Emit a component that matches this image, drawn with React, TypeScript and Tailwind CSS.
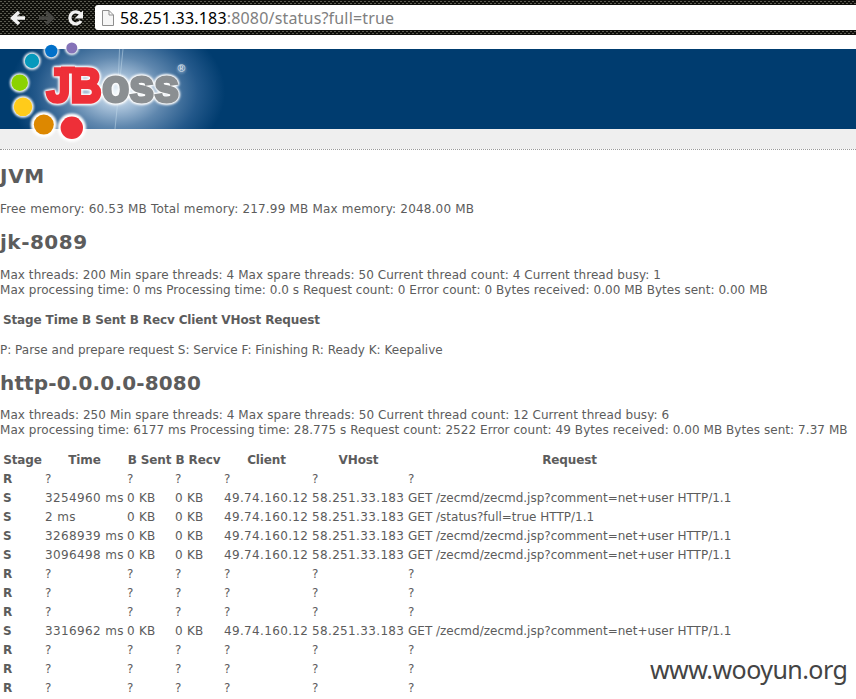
import React from "react";

const dots = [
  [71.8, 48, 5.5, "#8573b8"],
  [51.3, 51, 6.2, "#0070c9"],
  [32, 61, 7.2, "#0699bc"],
  [19.7, 82.7, 8.3, "#8bd200"],
  [23, 106.8, 9.3, "#ffcb1a"],
  [43.8, 124.6, 10, "#dd8800"],
  [71.8, 127.8, 11.2, "#ee2f38"],
] as const;

function Toolbar() {
  return (
    <header className="relative flex h-[35px] items-start">
      <svg className="absolute inset-0" width="856" height="35">
        <defs>
          <pattern id="weave" width="4" height="4" patternUnits="userSpaceOnUse">
            <rect width="4" height="4" fill="#10100c" />
            <rect x="0" y="1" width="2" height="1" fill="#5a5a50" />
            <rect x="2" y="3" width="2" height="1" fill="#5a5a50" />
          </pattern>
        </defs>
        <rect width="856" height="35" fill="url(#weave)" />
      </svg>
      <svg width="95" height="35" viewBox="0 0 95 35" className="relative shrink-0" fill="none">
        <path d="M25 18H13M19 12l-6.500 6 6.500 6" stroke="#f2f2f2" strokeWidth="3.400" />
        <path d="M39 18h12M46 12l6.500 6-6.500 6" stroke="#484844" strokeWidth="3.400" />
        <path d="M80.500 14a6 6 0 1 0 .5 7" stroke="#f2f2f2" strokeWidth="3.300" />
        <path d="M83 10.500v8h-8.500z" fill="#f2f2f2" />
      </svg>
      <div className="relative mt-[5px] flex h-[25px] flex-1 items-center rounded-l-[3px] bg-white pl-[7px]">
        <svg width="12" height="16" viewBox="0 0 12 16" fill="#f6f6f6" stroke="#8e8e8e">
          <path d="M.5 .5H7L11.500 5v10.500H.5zM7 .5V5h4.500" />
        </svg>
        <span className="ml-[6px] whitespace-pre font-['Noto_Sans',sans-serif] text-[16px] leading-6 tracking-[0.18px] text-[#808080]"><span className="text-black">58.251.33.183</span>:8080/status?full=true</span>
      </div>
    </header>
  );
}

function Banner() {
  return (
    <div className="relative h-[115px] border-b border-dotted border-[#999] bg-[linear-gradient(#fff_14px,#003c6f_14px,#003c6f_94px,#efefef_94px)]">
      <svg className="absolute left-0 top-0" width="240" height="114" viewBox="0 35 240 114">
        <defs>
          <radialGradient id="glow" cx="0" cy="0" r="1" gradientUnits="userSpaceOnUse" gradientTransform="translate(117 92) scale(108 78)">
            <stop offset="0" stopColor="#f2f8fc" />
            <stop offset=".2" stopColor="#a9c2da" />
            <stop offset=".45" stopColor="#5f87ae" />
            <stop offset=".75" stopColor="#23588a" />
            <stop offset="1" stopColor="#003c6f" />
          </radialGradient>
          <filter id="soft" x="-30%" y="-30%" width="160%" height="160%"><feGaussianBlur stdDeviation="1" /></filter>
        </defs>
        <rect y="49" width="240" height="80" fill="url(#glow)" />
        <path d="M119.500 49l-1.500 40M123 49l-8 80" stroke="#c4dcec" strokeOpacity=".5" />
        {dots.map(([x, y, r, c], i) => (
          <g key={c}>
            <circle cx={x} cy={y} r={r + (i > 4 ? 3 : 1.5)} fill="#fff" filter="url(#soft)" />
            <circle cx={x} cy={y} r={r} fill={c} />
          </g>
        ))}
        <g className="[filter:drop-shadow(0_0_1px_#fff)_drop-shadow(0_0_1px_#fff)_drop-shadow(0_0_1px_#fff)]" fontFamily="Liberation Sans, sans-serif" fontWeight="700">
          <path d="M61 66.500h14v7H61z" fill="#ee2f38" />
          <text x="46.500" y="101.500" fontSize="48" textLength="55" lengthAdjust="spacingAndGlyphs" fill="#ee2f38" stroke="#ee2f38" strokeWidth="3.500">JB</text>
          <text x="102" y="102" fontSize="46" textLength="77" lengthAdjust="spacingAndGlyphs" fill="#8b8f92" stroke="#8b8f92" strokeWidth="2.800">oss</text>
        </g>
        <circle cx="181.500" cy="69" r="4.500" fill="#7f9fbd" fillOpacity=".7" filter="url(#soft)" />
        <text x="177.500" y="72" fontSize="10.500" fontFamily="Liberation Sans, sans-serif" fontWeight="700" fill="#d0dce6">®</text>
      </svg>
    </div>
  );
}

const R = ["R", "?", "?", "?", "?", "?", "?"];
const S = (time: string, request: string) => ["S", time, "0 KB", "0 KB", "49.74.160.12", "58.251.33.183", request];
const zecmd = "GET /zecmd/zecmd.jsp?comment=net+user HTTP/1.1";
const rows = [
  R,
  S("3254960 ms", zecmd),
  S("2 ms", "GET /status?full=true HTTP/1.1"),
  S("3268939 ms", zecmd),
  S("3096498 ms", zecmd),
  R, R, R,
  S("3316962 ms", zecmd),
  R, R, R,
];
const cellStyles = [
  "font-bold",
  "tracking-[0.36px]",
  "tracking-[0.25px]",
  "tracking-[0.25px]",
  "tracking-[0.34px]",
  "tracking-[0.35px]",
  "",
];

export default function App() {
  return (
    <div className="relative h-[699px] w-[856px] overflow-hidden whitespace-nowrap bg-white font-['DejaVu_Sans',sans-serif] text-[12px] leading-[15px] text-[#5c5c5c]">
      <Toolbar />
      <Banner />
      <main>
        <h1 className="mt-[13px] text-[20px] font-bold leading-[26px] tracking-[0.7px]">JVM</h1>
        <p className="mt-[13px] tracking-[0.18px]">Free memory: 60.53 MB Total memory: 217.99 MB Max memory: 2048.00 MB</p>
        <h1 className="mt-[12px] text-[20px] font-bold leading-[26px] tracking-[0.5px]">jk-8089</h1>
        <p className="mt-[13px] tracking-[0.06px]">Max threads: 200 Min spare threads: 4 Max spare threads: 50 Current thread count: 4 Current thread busy: 1</p>
        <p className="tracking-[0.037px]">Max processing time: 0 ms Processing time: 0.0 s Request count: 0 Error count: 0 Bytes received: 0.00 MB Bytes sent: 0.00 MB</p>
        <p className="ml-[3px] mt-[15px] font-bold tracking-[-0.13px]">Stage Time B Sent B Recv Client VHost Request</p>
        <p className="mt-[15px]">P: Parse and prepare request S: Service F: Finishing R: Ready K: Keepalive</p>
        <h1 className="mt-[12px] text-[20px] font-bold leading-[26px] tracking-[0.15px]">http-0.0.0.0-8080</h1>
        <p className="mt-[12px] tracking-[0.065px]">Max threads: 250 Min spare threads: 4 Max spare threads: 50 Current thread count: 12 Current thread busy: 6</p>
        <p className="tracking-[0.06px]">Max processing time: 6177 ms Processing time: 28.775 s Request count: 2522 Error count: 49 Bytes received: 0.00 MB Bytes sent: 7.37 MB</p>
        <div className="ml-[3px] mt-[13px] grid auto-rows-[19px] grid-cols-[42px_82px_48px_49px_88px_96px_326px] leading-[19px]">
          {["Stage", "Time", "B Sent", "B Recv", "Client", "VHost", "Request"].map((h) => (
            <b key={h} className="pr-[3px] text-center tracking-[-0.12px]">{h}</b>
          ))}
          {rows.flatMap((r, i) => r.map((c, j) => (
            <span key={`${i}-${j}`} className={cellStyles[j]}>{c}</span>
          )))}
        </div>
      </main>
      <div className="absolute left-[650px] top-[651px] font-['Noto_Sans',sans-serif] text-[25px] leading-[36px] tracking-[-0.55px] text-[#444]">www.wooyun.org</div>
    </div>
  );
}
